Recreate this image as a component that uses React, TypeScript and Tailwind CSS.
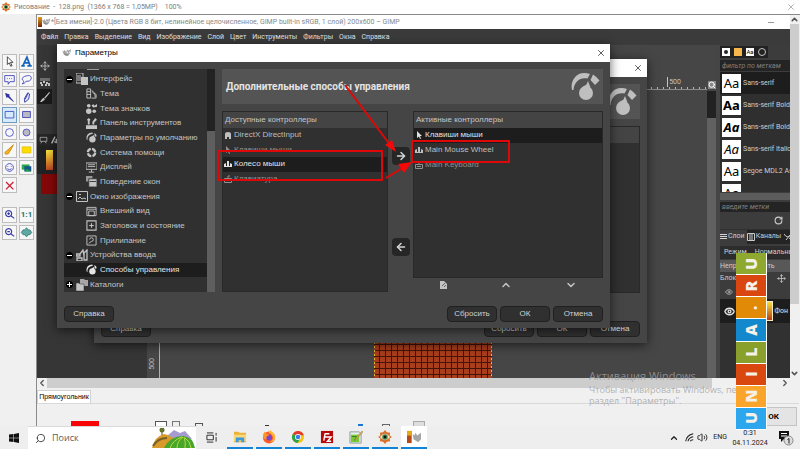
import type { ReactNode } from "react";
import {
  ArrowLeft,
  ArrowRight,
  ChevronDown,
  ChevronLeft,
  ChevronRight,
  ChevronUp,
  Eye,
  Move,
  RotateCw,
  Search,
  Volume2,
  X,
} from "lucide-react";

const toolIcons: { label: string; active?: boolean; icon: ReactNode }[] = [
  { label: "Курсор", icon: <path d="M5 2v9l2-2 2 4 1.500-.7-2-3.800h3z" fill="#fff" stroke="#333" /> },
  { label: "Текст", icon: <path d="M1.500 12.500h4M8.500 12.500h5M3.500 12 8 2.500l3.500 9.500M5.500 9h5" fill="none" stroke="#1565c0" strokeWidth="2" /> },
  { label: "Выноска", icon: <path d="M2 3h11v7H8l-2 3v-3H2zM4.500 6.500h1M7 6.500h1M9.500 6.500h1" fill="none" stroke="#3a3fb5" /> },
  { label: "Облако", icon: <path d="M7 3.500c4-1.500 6 0 6 2.500s-3 4-6 3.500c-1 2-3 3-4.500 3 1.500-1 2-2 1.500-3.500C1 7.500 3 4 7 3.500z" fill="none" stroke="#3a3fb5" /> },
  { label: "Стрелка", icon: <path d="M3 3l4.500 1.500-1 1L12 12 5.500 6.500l-1 1z" fill="#2a2fa0" stroke="#2a2fa0" /> },
  { label: "Карандаш", icon: <path d="M9 2l2 1.500-1 6L5.500 13l-.5-4zM9 3 6 9.500" fill="#dfe3ff" stroke="#2a2fa0" /> },
  { label: "Прямоугольник", active: true, icon: <path d="M2.500 4h10v7.500h-10z" fill="none" stroke="#3a4fc5" /> },
  { label: "Закрашенный прямоугольник", icon: <path d="M3 4h9v7H3z" fill="#b9b9c4" stroke="#3a3fb5" /> },
  { label: "Эллипс", icon: <circle cx="7.500" cy="7.500" r="4.500" fill="none" stroke="#4a4fc5" /> },
  { label: "Закрашенный эллипс", icon: <circle cx="7.500" cy="7.500" r="4" fill="#b9b9c4" stroke="#4a4fc5" /> },
  { label: "Кисть", icon: <path d="M12 2 6.500 7l2 2zM6 7.500 2 11l1 2 3-.5 2-3z" fill="#f5b51c" stroke="#c98b10" /> },
  { label: "Маркер", icon: <path d="M2.500 4.500h10v7h-10z" fill="#ffdb00" stroke="#e7c400" /> },
  { label: "Смайлик", icon: <path d="M7.500 3a4.500 4.500 0 1 0 .01 0zM5.500 6v.8M9.500 6v.8M5 9q2.500 2 5 0" fill="none" stroke="#3a3fb5" /> },
  { label: "Картинка", icon: <><path d="M2 4h9v6H2z" fill="#2aa84a" /><path d="M5 6h8v6H5z" fill="#15558c" /><path d="M5 12l3-3 5 3z" fill="#1aa04a" /></> },
  { label: "Удалить", icon: <path d="M3.500 3.500l8.500 8.500M12 3.500 3.500 12" fill="none" stroke="#cf1f3c" strokeWidth="1.500" /> },
];

const zoomIcons: { label: string; icon: ReactNode }[] = [
  { label: "Увеличить", icon: <path d="M6.500 3a3.500 3.500 0 1 0 .01 0zM9 9l4 3M6.500 5v3M5 6.500h3" fill="none" stroke="#353ba5" strokeWidth="1.300" /> },
  { label: "1:1", icon: null },
  { label: "Уменьшить", icon: <path d="M6.500 3a3.500 3.500 0 1 0 .01 0zM9 9l4 3M5 6.500h3" fill="none" stroke="#353ba5" strokeWidth="1.300" /> },
  { label: "По размеру окна", icon: <path d="M7.500 2l2 2.500h2L13.500 7.500l-2 2.500h-2l-2 2.500-2-2.500h-2L1.500 7.500l2-3h2z" fill="#5fa8a0" stroke="#2f7f78" /> },
];

const iconInterface = <><path d="M0 0h7v10H0zM2 2v6M4 2v6" fill="none" stroke="currentColor" /><path d="M5 4h7v8H5z" fill="currentColor" /></>;
const iconTheme = <path d="M1 1h4v10H1zM1 4h4M1 7h4M6 3q4 1 4 7M6 11h5V7L7 5" fill="none" stroke="currentColor" />;
const iconThemeIcons = <><circle cx="3" cy="3" r="2" /><circle cx="3" cy="9" r="3" /><circle cx="9" cy="9" r="2" /><path d="M6 3l2-2 1 2 3-2v3L8 5z" /></>;
const iconTools = <path d="M0 8h12v4H0zM1 2l2-2 2 2-1 1v4H2V3zM7 4l3-4 2 2-3 3v2H7z" />;
const iconGauge = <><circle cx="7" cy="8" r="3.500" /><path d="M7 .5Q0 1 .5 7.500L1.500 9Q1 3 7.500 2zM8.800 1.200l2.200 1.300.7 2-1.700.6zM6 5l3-2v4z" /></>;
const iconHelp = <circle cx="6" cy="6" r="4" fill="none" stroke="currentColor" strokeWidth="2.500" strokeDasharray="5 1.300" />;
const iconDisplay = <path d="M0 1h12v7H0zM3 11h6M2 3h8M2 5h8M6 8v3" fill="none" stroke="currentColor" />;
const iconWindows = <><path d="M0 0h7v6H0z" opacity=".7" /><path d="M3 3h9v9H3z" stroke="#333" /><path d="M4 6h7" stroke="#333" /></>;
const iconCanvas = <><path d="M.5.5h11v10H.5zM2 8l2-2 2 2 2-1 2 1" fill="none" stroke="currentColor" /><path d="M3 3h2v1H3z" /></>;
const iconLook = <path d="M1 1.500h10v9H1zM1 3.500h10M3 5.500h6v5H3z" fill="none" stroke="currentColor" />;
const iconTitle = <path d="M1 1h10v10H1zM6 3.500v5M3.500 6h5" fill="none" stroke="currentColor" strokeWidth="1.200" />;
const iconSnap = <path d="M1 1h10v10H1zM4 5q0-2 2-2t2 2-2 2l-3 2" fill="none" stroke="currentColor" />;
const iconInput = <path d="M1 9h5v3H1zM0 5h4v2H0zM4 5l3-4 1 6M8 4l3-3v10H8z" fill="none" stroke="currentColor" strokeWidth="1.300" />;
const iconFolders = <><path d="M4 0h4l1 1h3v6H4z" opacity=".8" /><path d="M0 4h3l1 1h4v7H0z" stroke="#333" strokeWidth=".5" /></>;

const tree: { label: string; icon: ReactNode; level?: "root"; open?: boolean; selected?: boolean }[] = [
  { label: "Интерфейс", icon: iconInterface, level: "root", open: true },
  { label: "Тема", icon: iconTheme },
  { label: "Тема значков", icon: iconThemeIcons },
  { label: "Панель инструментов", icon: iconTools },
  { label: "Параметры по умолчанию", icon: iconGauge },
  { label: "Система помощи", icon: iconHelp },
  { label: "Дисплей", icon: iconDisplay },
  { label: "Поведение окон", icon: iconWindows },
  { label: "Окно изображения", icon: iconCanvas, level: "root", open: true },
  { label: "Внешний вид", icon: iconLook },
  { label: "Заголовок и состояние", icon: iconTitle },
  { label: "Прилипание", icon: iconSnap },
  { label: "Устройства ввода", icon: iconInput, level: "root", open: true },
  { label: "Способы управления", icon: iconGauge, selected: true },
  { label: "Каталоги", icon: iconFolders, level: "root" },
];

const padIcon = <path d="M1 8V3q0-2 3-2t3 2v5H5V6H3v2z" />;
const pointerIcon = <path d="M2 0v7l2-1.500L5 8l1-.5L5 5h2z" />;
const wheelIcon = <path d="M0 7V4l2-1v3h1V1h2v5h1V3l2 1v3z" />;
const keyboardIcon = <path d="M.5 3.500h7v4h-7zM2 5.500h4M4 3V1h2" fill="none" stroke="currentColor" />;

type Controller = { label: string; icon: ReactNode; selected?: boolean; dim?: boolean };

const available: Controller[] = [
  { label: "DirectX DirectInput", icon: padIcon },
  { label: "Клавиши мыши", icon: pointerIcon, dim: true },
  { label: "Колесо мыши", icon: wheelIcon, selected: true },
  { label: "Клавиатура", icon: keyboardIcon, dim: true },
];

const active: Controller[] = [
  { label: "Клавиши мыши", icon: pointerIcon, selected: true },
  { label: "Main Mouse Wheel", icon: wheelIcon },
  { label: "Main Keyboard", icon: keyboardIcon, dim: true },
];

const menu = ["Файл", "Правка", "Выделение", "Вид", "Изображение", "Слой", "Цвет", "Инструменты", "Фильтры", "Окна", "Справка"];

const fonts = [
  { name: "Sans-serif", style: "" },
  { name: "Sans-serif Bold", style: "font-bold" },
  { name: "Sans-serif Bold", style: "font-bold italic" },
  { name: "Sans-serif Italic", style: "italic" },
  { name: "Segoe MDL2 As", style: "" },
  { name: "", style: "" },
];

const tiles = [
  { letter: "U", color: "bg-[#8fa82f]" },
  { letter: "R", color: "bg-[#d9460f]" },
  { letter: ".", color: "bg-[#e08a08]" },
  { letter: "A", color: "bg-[#1488cc]" },
  { letter: "L", color: "bg-[#8aa02c]" },
  { letter: "I", color: "bg-[#d8480f]" },
  { letter: "N", color: "bg-[#fba42c]" },
  { letter: "U", color: "bg-[#2ca6ec]" },
];

const Glyph = ({ children, className = "size-3", box = "0 0 12 12" }: { children: ReactNode; className?: string; box?: string }) => (
  <svg viewBox={box} className={`shrink-0 ${className}`} fill="currentColor" aria-hidden="true">
    {children}
  </svg>
);

const Wilber = ({ className = "" }: { className?: string }) => (
  <svg viewBox="0 0 12 10" className={`shrink-0 ${className}`} aria-hidden="true">
    <path d="M0 2l2 1 1-2 2 3 1-3 2 1 3-2-1 5-2 3-3 1-3-2.500z" fill="#a3a3a3" />
    <circle cx="6.500" cy="4.500" r="1" fill="#eee" />
    <circle cx="9" cy="4" r=".8" fill="#eee" />
    <path d="M2 6.500l5 1" stroke="#777" strokeWidth=".8" />
  </svg>
);

const GaugeLogo = () => (
  <svg viewBox="0 0 30 28" className="h-7 w-[30px] shrink-0" fill="#bfbfbf" aria-hidden="true">
    <path d="M1 17C-1 8 5 0 13 0q3.500 0 6 1l-2.500 4.500C9 4 3 9 2.500 17z" />
    <path d="M22 1.500q4 2.500 6.500 6L24 12l-4.500-5z" />
    <path d="M10.500 14.500l5-3L17 8l2.500 6.500z" />
    <circle cx="15" cy="20" r="7" />
  </svg>
);

const GimpButton = ({ children }: { children: ReactNode }) => (
  <button className="h-4 w-[50px] rounded-sm border border-[#202020] bg-[#303030] text-center text-[8px] leading-3 text-[#d0d0d0]">
    {children}
  </button>
);

const PrefsWindow = ({ children, title, className }: { children: ReactNode; title?: string; className: string }) => (
  <div className={`absolute w-[553px] bg-[#454545] font-['Liberation_Sans',sans-serif] shadow-[0_2px_10px_rgba(0,0,0,0.6)] ${className}`}>
    <div className="flex h-[18px] items-center bg-white px-1">
      <Wilber className="h-2 w-3" />
      <span className="ml-[2px] flex-1 text-[8px] text-black">{title}</span>
      <button aria-label="Закрыть">
        <X className="size-[10px] text-neutral-700" strokeWidth={2} />
      </button>
    </div>
    <div className="px-[7px] pt-[7px] pb-[6px]">
      {children}
      <div className="mt-[14px] flex gap-[3px]">
        <GimpButton>Справка</GimpButton>
        <div className="flex-1" />
        <GimpButton>Сбросить</GimpButton>
        <GimpButton>ОК</GimpButton>
        <GimpButton>Отмена</GimpButton>
      </div>
    </div>
  </div>
);

const ControllerList = ({
  title,
  items,
  className,
  rowsClass,
}: {
  title: string;
  items: Controller[];
  className: string;
  rowsClass: string;
}) => (
  <div className={`flex flex-col border border-[#292929] bg-[#303030] ${className}`}>
    <div className="h-4 bg-[#444444] px-[2px] text-[8px] leading-4 text-[#c4c4c4]">{title}</div>
    <ul className={`grid auto-rows-fr ${rowsClass}`}>
      {items.map((item) => (
        <li
          key={item.label}
          className={`flex min-h-0 items-center gap-[2px] px-px text-[8px] leading-3 ${
            item.selected ? "bg-[#1d1d1d] text-[#e2e2e2]" : item.dim ? "text-[#909090]" : "text-[#bebebe]"
          }`}
        >
          <Glyph className="size-2" box="0 0 8 8">{item.icon}</Glyph>
          {item.label}
        </li>
      ))}
    </ul>
  </div>
);

const CategoryTree = () => (
  <div className="flex h-[223px] w-[151px] overflow-hidden bg-[#303030]">
    <div className="flex flex-1 flex-col">
      <div className="flex h-[3px] items-start pl-[23px]">
        <span className="h-px w-3 bg-[#9a9a9a]" />
      </div>
      <ul className="grid flex-1 auto-rows-fr">
        {tree.map((node) => (
          <li
            key={node.label}
            className={`flex min-h-0 items-center text-[8px] leading-3 ${node.selected ? "bg-[#1d1d1d] text-[#e4e4e4]" : "text-[#c4c4c4]"} ${
              node.level ? "pl-[2px]" : "pl-[22px]"
            }`}
          >
            {node.level && (
              <span className="mr-[3px] flex size-[7px] items-center justify-center rounded-sm bg-black">
                <svg viewBox="0 0 5 5" className="size-[5px]" stroke="#fff" aria-hidden="true">
                  <path d={node.open ? "M0 2.500h5" : "M0 2.500h5M2.500 0v5"} />
                </svg>
              </span>
            )}
            <Glyph className={node.level ? "mr-[2px] size-3" : "mr-[3px] size-[11px]"}>{node.icon}</Glyph>
            <span className="whitespace-nowrap">{node.label}</span>
          </li>
        ))}
      </ul>
    </div>
    <div className="flex w-2 flex-col bg-[#222222]">
      <div className="mt-[62px] flex-1 bg-[#5e5e5e]" />
    </div>
  </div>
);

const FrontDialog = () => (
  <PrefsWindow title="Параметры" className="left-5 top-[29px]">
    <div className="flex gap-[7px]">
      <CategoryTree />
      <div className="flex flex-1 flex-col gap-[7px]">
        <div className="flex h-[35px] items-center justify-between bg-[#545454] pl-1 pr-[2px]">
          <h1 className="font-[Roboto,sans-serif] text-[10px] font-bold text-[#e4e4e4]">Дополнительные способы управления</h1>
          <GaugeLogo />
        </div>
        <div className="flex flex-1">
          <ControllerList title="Доступные контроллеры" items={available} className="w-[166px]" rowsClass="h-[58px]" />
          <div className="flex w-[25px] flex-col items-center gap-[73px] pt-9">
            <button aria-label="Добавить" className="flex size-[18px] items-center justify-center rounded-sm bg-[#262626] text-[#d5d5d5]">
              <ArrowRight className="size-3" strokeWidth={3} />
            </button>
            <button aria-label="Убрать" className="flex size-[18px] items-center justify-center rounded-sm bg-[#262626] text-[#d5d5d5]">
              <ArrowLeft className="size-3" strokeWidth={3} />
            </button>
          </div>
          <div className="flex flex-1 flex-col">
            <ControllerList title="Активные контроллеры" items={active} className="flex-1" rowsClass="h-11" />
            <div className="flex h-[14px] items-center justify-around text-[#c4c4c4]">
              <button aria-label="Настроить">
                <Glyph className="size-2" box="0 0 8 8">
                  <path d="M1 0h4l3 3v5H1z" />
                  <path d="M3 5l3-3M5 6l2-2" stroke="#666" />
                </Glyph>
              </button>
              <button aria-label="Выше">
                <ChevronUp className="size-3" strokeWidth={3} />
              </button>
              <button aria-label="Ниже">
                <ChevronDown className="size-3" strokeWidth={3} />
              </button>
            </div>
          </div>
        </div>
      </div>
    </div>
  </PrefsWindow>
);

const BackDialog = () => (
  <PrefsWindow className="left-[57px] top-11">
    <div className="flex h-[223px] flex-col gap-[7px] pl-[158px]">
      <div className="flex h-[35px] items-center justify-end bg-[#545454] pr-[2px]">
        <GaugeLogo />
      </div>
      <div className="mb-[14px] flex-1 border border-[#292929] bg-[#303030]">
        <div className="h-4 bg-[#444444]" />
      </div>
    </div>
  </PrefsWindow>
);

const Toolbox = () => (
  <aside className="flex w-9 shrink-0 flex-col bg-[#f0f0f0] px-[2px] pt-10">
    <div className="grid h-[139px] auto-rows-fr grid-cols-2 gap-x-[2px] gap-y-[2px]">
      {toolIcons.map((tool) => (
        <button
          key={tool.label}
          aria-label={tool.label}
          className={`flex items-center justify-center border ${tool.active ? "border-[#6f9cc0] bg-[#d6eafa]" : "border-[#bdbdbd] bg-[#f7f7f7]"}`}
        >
          <Glyph className="size-[13px]" box="0 0 15 15">{tool.icon}</Glyph>
        </button>
      ))}
    </div>
    <div className="mt-[14px] grid h-[33px] auto-rows-fr grid-cols-2 gap-x-[2px] gap-y-[2px]">
      {zoomIcons.map((tool) => (
        <button key={tool.label} aria-label={tool.label} className="flex items-center justify-center border border-[#bdbdbd] bg-[#f7f7f7]">
          {tool.icon ? (
            <Glyph className="size-[13px]" box="0 0 15 15">{tool.icon}</Glyph>
          ) : (
            <span className="text-[8px] leading-3 font-bold text-[#1d7466]">1:1</span>
          )}
        </button>
      ))}
    </div>
  </aside>
);

const GimpTools = () => (
  <div className="flex w-[110px] shrink-0 flex-col bg-[#363636] text-[#c4c4c4]">
    <div className="flex h-[44px] w-[15px] flex-col items-center gap-[7px] pt-4">
      <Move className="size-[10px]" strokeWidth={2} />
      <Glyph className="h-2 w-[10px]" box="0 0 10 8">
        <path d="M0 0h10v3H0z" opacity=".4" />
        <path d="M0 4h2v2H0zM3 3h2v2H3zM6 4h2v2H6zM1 6h2v2H1zM5 6h2v2H5zM8 5h2v3H8z" />
      </Glyph>
    </div>
    <div className="flex size-[15px] items-center justify-center bg-[#1b1b1b]">
      <Glyph className="size-[10px]">
        <path d="M11 0 5 7l1 1 6-7zM4 7l2 2-4 3H0l2-3z" />
      </Glyph>
    </div>
    <div className="mt-[30px] flex h-3 items-center gap-[3px] bg-[#262626] pl-[2px]">
      <Glyph className="h-2 w-[9px]">
        <path d="M1 2h10v6H1zM4 8l-2 3M8 8l2 3" fill="none" stroke="currentColor" />
      </Glyph>
      <Glyph className="size-2">
        <path d="M1 11 6 1M5 9h4M8 4v7" fill="none" stroke="currentColor" strokeWidth="2" />
      </Glyph>
    </div>
    <div className="flex w-6 justify-center bg-[#222222] py-1">
      <div className="h-5 w-[7px] bg-gradient-to-b from-[#f4e03a] to-[#bb4420]" />
    </div>
    <div className="ml-1 h-5 w-5 bg-[#850808]" />
  </div>
);

const Canvas = () => (
  <div className="flex min-w-0 flex-1 flex-col bg-[#464646] pt-8">
    <div className="flex h-[10px] items-end justify-end">
      <span className="mr-[26px] border-l border-[#c4c4c4] pl-px text-[7px] leading-[10px] text-[#c4c4c4]">500</span>
    </div>
    <svg className="h-[3px] w-full" aria-hidden="true">
      <path d="M0 2.500h2000" stroke="#8a8a8a" />
      <path d="M0 1h2000" stroke="#b5b5b5" strokeWidth="2" strokeDasharray="1 5" />
    </svg>
    <div className="flex flex-1 items-stretch">
      <div className="flex w-[13px] flex-col justify-end border-r border-[#b0b0b0] bg-[#474747] pb-2 text-[7px] text-[#c0c0c0]">
        <span className="[writing-mode:vertical-rl] rotate-180 leading-[10px]">500</span>
      </div>
      <div className="flex flex-1 items-end pl-[214px]">
        <svg className="h-[36px] w-[118px]" aria-hidden="true">
          <defs>
            <pattern id="grid" width="6" height="6" patternUnits="userSpaceOnUse">
              <path d="M0 0h6v6H0z" fill="#a93e1c" />
              <path d="M5.500 0v6M0 2.500h6" stroke="#42150a" />
            </pattern>
          </defs>
          <rect width="118" height="36" fill="url(#grid)" />
          <path d="M.5 0v36M117.500 0v36" stroke="#d6c02c" strokeDasharray="2 2" />
        </svg>
      </div>
    </div>
  </div>
);

const Dock = () => (
  <aside className="flex w-[70px] shrink-0 flex-col overflow-hidden bg-[#3c3c3c] pt-px text-[7px] text-[#cccccc]">
    <div className="flex h-3 w-12 items-center justify-around bg-[#222222]">
      <span className="flex size-2 items-center justify-center bg-white">
        <span className="size-1 rounded-full bg-neutral-800" />
      </span>
      <span className="size-2 bg-[#f6b64b]" />
      <span className="size-2 bg-white text-center text-[6px] leading-2 text-black">Aa</span>
      <span className="size-2 rounded-full border border-[#c4c4c4]" />
    </div>
    <input
      aria-label="Фильтр по меткам"
      placeholder="фильтр по меткам"
      className="mt-[2px] h-[11px] w-full bg-[#242424] px-[2px] text-[7px] italic placeholder:text-[#808080]"
    />
    <ul className="mt-px h-[120px] shrink-0 overflow-hidden bg-[#2f2f2f]">
      {fonts.map((font, i) => (
        <li key={i} className={`flex h-[22px] items-center gap-[2px] pl-[2px] whitespace-nowrap ${i === 0 ? "bg-[#1d1d1d]" : ""}`}>
          <span className={`flex size-[19px] shrink-0 items-center justify-center bg-white font-['Noto_Sans',sans-serif] text-[13px] leading-4 text-black ${font.style}`}>Aa</span>
          {font.name}
        </li>
      ))}
    </ul>
    <div className="mt-px h-[7px] shrink-0 bg-[#5c5c5c]" />
    <input
      aria-label="Метки"
      placeholder="введите метки"
      className="mt-[2px] h-[10px] w-full bg-[#242424] px-[2px] text-[7px] italic placeholder:text-[#808080]"
    />
    <div className="flex h-[17px] items-center justify-end pr-[7px]">
      <RotateCw className="size-[9px]" strokeWidth={3} />
    </div>
    <div className="flex h-[14px] items-center border-t border-[#303030] whitespace-nowrap">
      <span className="mr-px flex flex-col gap-px">
        <span className="h-px w-[7px] bg-[#d5d5d5]" />
        <span className="h-px w-[7px] bg-[#d5d5d5]" />
        <span className="h-px w-[7px] bg-[#d5d5d5]" />
      </span>
      Слои
      <span className="ml-[2px] flex h-[14px] items-center gap-px bg-[#242424]">
        <Glyph className="size-2" box="0 0 8 8">
          <path d="M.5.500h7v7h-7zM3 1v6M5 1v6" fill="none" stroke="currentColor" />
        </Glyph>
        Каналы
        <Glyph className="ml-[2px] size-2" box="0 0 8 8">
          <path d="M0 1q3 5 7 1M2 7l4-5M5 5l3 2" fill="none" stroke="currentColor" />
        </Glyph>
      </span>
    </div>
    <div className="mt-[3px] flex h-[13px] shrink-0 items-center gap-2 bg-[#2c2c2c] pl-1 whitespace-nowrap">
      <span>Режим</span>
      <span>Нормальный</span>
    </div>
    <div className="mt-px h-3 shrink-0 bg-[#585858] leading-3">Непрозрачность</div>
    <div className="flex h-[13px] shrink-0 items-center justify-between overflow-hidden pr-1 whitespace-nowrap">
      <span>Блокировка</span>
      <Move className="size-[9px] shrink-0" strokeWidth={2} />
    </div>
    <div className="flex h-[14px] shrink-0 items-center pl-[5px]">
      <Eye className="size-2" />
    </div>
    <div className="flex h-6 shrink-0 items-center bg-[#1d1d1d] pl-1 text-[#e0e0e0]">
      <Eye className="size-[11px]" strokeWidth={3} />
      <span className="ml-auto h-5 w-[10px] border border-[#f4ebc0] bg-gradient-to-b from-[#f4e03a] to-[#b03a18]" />
      <span className="mx-[2px] whitespace-nowrap">Фон</span>
    </div>
    <div className="flex-1 bg-[#313131]" />
  </aside>
);

const GimpWindow = () => (
  <section className="relative flex min-w-0 flex-1 flex-col overflow-hidden bg-[#454545]">
    <div className="flex h-[14px] shrink-0 items-center bg-white pl-px text-[7px] text-[#878787]">
      <span className="h-[10px] w-1 bg-gradient-to-b from-[#e8a020] to-[#732407]" />
      <Wilber className="h-2 w-[9px]" />
      <span className="flex-1 whitespace-nowrap">
        *[Без имени]-2.0 (Цвета RGB 8 бит, нелинейное целочисленное, GIMP built-in sRGB, 1 слой) 200x600 – GIMP
      </span>
      <span className="mr-4 h-px w-[6px] bg-[#999999]" />
    </div>
    <nav className="flex h-4 shrink-0 items-center gap-[6px] bg-[#3b3b3b] pl-1 text-[7px] text-[#e0e0e0]">
      {menu.map((item) => (
        <button key={item}>{item}</button>
      ))}
    </nav>
    <div className="flex flex-1">
      <GimpTools />
      <Canvas />
      <div className="mr-1 flex w-[9px] shrink-0 flex-col bg-[#222222]">
        <div className="h-[34px] bg-[#464646]" />
        <div className="flex h-3 items-center justify-center bg-[#464646]">
          <Search className="size-2 bg-[#888888] text-white" strokeWidth={3} />
        </div>
        <div className="mt-[27px] flex-1 bg-[#616161]" />
      </div>
      <Dock />
    </div>

    <BackDialog />
    <FrontDialog />

    {/* Callout frames and arrows */}
    <svg viewBox="0 0 300 110" className="pointer-events-none absolute left-[179px] top-[65px] h-[110px] w-[300px]" aria-hidden="true">
      <g fill="none" stroke="#df0808" strokeWidth="2">
        <path d="M2 71h164v29H2zM196 61h97v21h-97z" />
        <path d="M129 5l46 61M170 98l18-11" />
      </g>
      <path d="M180 72l-11-7 7-5zM196 82l-8 11-6-9z" fill="#f50808" />
    </svg>
  </section>
);

const WinLogo = () => (
  <svg viewBox="0 0 10 10" className="size-[10px]" fill="#111" aria-hidden="true">
    <path d="M0 1.500 4.500 1v3.700H0zM5 .9 10 0v4.700H5zM0 5.200h4.500V9L0 8.500zM5 5.200h5V10l-5-.9z" />
  </svg>
);

const apps: { label: string; current?: boolean; icon: ReactNode }[] = [
  { label: "Проводник", icon: <><path d="M1 2h5l1 1h7v10H1z" fill="#e9b23a" /><path d="M1 5h13v7H1z" fill="#fbd777" /><path d="M3 13V8h9v5h-3v-2H6v2z" fill="#3a9adb" /></> },
  { label: "Firefox", icon: <><circle cx="7.500" cy="8" r="6.500" fill="#ff5a2a" /><path d="M7 3l2-3c1 2 5 3 5 8a6 6 0 0 1-6 5c6-2 5-8-1-10z" fill="#ffbd2e" /><circle cx="7.500" cy="8" r="3.200" fill="#7a45c9" /><path d="M1 7c0-2 1-4 2-5 1 3 4 2 5 4-3 0-4 2-3 4-2 0-4-1-4-3z" fill="#ff9524" /></> },
  { label: "Chrome", icon: <><circle cx="7.500" cy="7.500" r="6.500" fill="#f9c513" /><path d="M7.500 7.500 1.900 4.200A6.500 6.500 0 0 1 13.700 5.500H7.500z" fill="#e33b2e" /><path d="M7.500 7.500 1.900 4.200A6.500 6.500 0 0 0 7 14l3-5z" fill="#2da14c" /><circle cx="7.500" cy="7.500" r="3.200" fill="#fff" /><circle cx="7.500" cy="7.500" r="2.400" fill="#3b7ee6" /></> },
  { label: "FileZilla", icon: <><path d="M1 1h13v13H1z" fill="#b5080b" /><path d="M4 11.500 5.500 4H10M5 7.500h3.500M8 7.500h4L8 12h4" fill="none" stroke="#fff" strokeWidth="1.500" /></> },
  { label: "Notepad++", icon: <><path d="M1 2h10l2 2v10H1z" fill="#e8edf0" stroke="#8b9a9a" /><path d="M2 5h9v8H2z" fill="#78c932" /><path d="M3 7h5l-2 4" fill="none" stroke="#2f7d1b" /><path d="M14 1 7 9l-1 2 2-1 7-8z" fill="#edb52a" stroke="#777" strokeWidth=".5" /></> },
  { label: "PicPick", icon: <><path d="M7.500 0l2 2.500L13 3l-.5 3L15 7.500 12.500 9l.5 3-3.500.5-2 2.500-2-2.500L2 12l.5-3L0 7.500 2.500 6 2 3l3.500-.5z" fill="#d9702c" /><path d="M2 7.500q5.500-7 11 0-5.500 7-11 0z" fill="#f0e8b8" /><circle cx="7.500" cy="7.500" r="3" fill="#4b8a5a" /><circle cx="7.500" cy="7.500" r="1.500" fill="#111" /></> },
  { label: "GIMP", current: true, icon: <><path d="M0 1h5v13H0z" fill="#b84818" /><path d="M0 1h5v5H0z" fill="#e6a91d" /><path d="M6 4l2 2 1-3 2 3 4-3v7l-3 3-5-3z" fill="#a5a5a5" /></> },
];

const Taskbar = () => (
  <footer className="flex h-[23px] shrink-0 items-center bg-[#eeeeee] text-[#222222]">
    <button aria-label="Пуск" className="flex w-7 justify-center">
      <WinLogo />
    </button>
    <label className="flex h-full w-[168px] items-center overflow-hidden border-t border-[#d9d9d9] bg-white pl-[7px]">
      <Search className="size-[11px] shrink-0 -scale-x-100 text-neutral-700" strokeWidth={2} />
      <input aria-label="Поиск" placeholder="Поиск" className="ml-[6px] w-20 text-[9px] font-['Open_Sans',sans-serif] placeholder:text-[#5c5c5c]" />
      <svg viewBox="0 0 44 20" className="ml-auto h-5 w-11 shrink-0" aria-hidden="true">
        <path d="M14 9 22 2l6 3 5-2 7 8H14z" fill="#a59bd0" />
        <path d="M0 20Q3 8 12 6q6 1 10 5l-8 9z" fill="#d99a2c" />
        <path d="M1 18q5-8 14-8" stroke="#785f26" strokeWidth="2" fill="none" />
        <path d="M12 20Q18 8 31 8q10 1 12 12z" fill="#46a52a" />
        <path d="M18 20q3-8 12-11M25 20q0-7 6-11M33 20q1-6-1-11M39 20q-1-7-6-10" stroke="#b7db3f" fill="none" />
        <path d="M10 7V2" stroke="#664322" />
        <circle cx="10" cy="2" r="2.500" fill="#63742a" />
      </svg>
    </label>
    <button aria-label="Представление задач" className="flex w-[30px] justify-center">
      <Glyph className="size-[11px]">
        <path d="M1 1h7M1 11h7M1 3.500h7v5H1zM11 1v3M11 5.500v5" fill="none" stroke="currentColor" />
      </Glyph>
    </button>
    <div className="flex h-full gap-[3px] pl-px">
      {apps.map((app) => (
        <button
          key={app.label}
          aria-label={app.label}
          className={`flex w-[26px] items-center justify-center border-b-2 border-[#1383d8] ${app.current ? "bg-white" : ""}`}
        >
          <Glyph className="size-[14px]" box="0 0 15 15">{app.icon}</Glyph>
        </button>
      ))}
    </div>
    <div className="ml-auto flex items-center">
      <ChevronUp className="size-[10px]" strokeWidth={3} />
      <Glyph className="ml-[6px] size-[9px]">
        <path d="M1 11Q2 3 11 1M4 11q1-5 7-6M7 11q1-2 4-2" fill="none" stroke="currentColor" strokeWidth="1.500" />
      </Glyph>
      <Volume2 className="ml-[3px] size-[11px]" strokeWidth={2} />
      <span className="ml-[5px] text-[7px]">ENG</span>
      <span className="ml-[5px] flex w-9 flex-col items-center text-[7px] leading-[10px]">
        <span>0:31</span>
        <span>04.11.2024</span>
      </span>
      <button aria-label="Уведомления" className="relative mr-[6px] ml-[10px] w-4">
        <svg viewBox="0 0 16 16" className="size-4" aria-hidden="true">
          <path d="M1 1h10v8H6l-3 3V9H1z" fill="#111" />
          <path d="M3 3.500h6M3 6h6" stroke="#fff" />
          <circle cx="10.500" cy="10.500" r="4.500" fill="#ddd" stroke="#888" />
          <path d="M9.500 9.500l1.500-1v5" stroke="#222" fill="none" />
        </svg>
      </button>
    </div>
  </footer>
);

const ToolPanel = () => (
  <div className="h-[38px] shrink-0 overflow-hidden bg-[#f0f0f0] pt-[2px]">
    <button className="block h-[13px] w-[54px] border border-b-0 border-[#d2d2d2] bg-white font-['Liberation_Sans',sans-serif] text-[7px] leading-3 text-black">Прямоугольник</button>
    <div className="flex h-[23px] items-end border-t border-[#d9d9d9]">
      <div className="flex flex-1 items-end gap-[5px] pl-[34px]">
        <span className="h-[5px] w-7 bg-[#f80505]" />
        <span className="ml-[51px] h-[5px] w-3 border border-b-0 border-[#555555] bg-white" />
        <span className="h-[5px] w-2 border border-b-0 border-[#777777]" />
        <span className="ml-[10px] h-[3px] w-2 border border-b-0 border-[#555555]" />
        <span className="ml-[57px] h-px w-1 bg-[#333333]" />
        <span className="ml-[84px] h-[2px] w-[5px] bg-[#1976d2]" />
        <span className="ml-[14px] h-[2px] w-2 border border-b-0 border-[#666666]" />
        <span className="ml-[18px] h-[5px] w-3 border border-b-0 border-[#aaaaaa] bg-[#dddddd]" />
      </div>
      <button className="mr-[2px] h-[19px] w-[55px] border border-[#c4c4c4] bg-[#e4e4e4] pl-2 text-[8px] font-bold text-black">ОК</button>
    </div>
  </div>
);

const App = () => {
  return (
    <main className="relative flex h-screen flex-col overflow-hidden bg-[#f0f0f0] font-[Roboto,'Noto_Sans',sans-serif]">
      <header className="flex h-[14px] shrink-0 items-center bg-white pl-px pr-1">
        <Glyph className="size-[10px]" box="0 0 15 15">{apps[5].icon}</Glyph>
        <span className="ml-[3px] flex-1 text-[7px] whitespace-pre text-[#7c7c7c]">{"Рисование  -  128.png  (1366 x 768 = 1,05MP)    100%"}</span>
        <button aria-label="Закрыть">
          <X className="size-[10px] text-[#a5a5a5]" strokeWidth={2} />
        </button>
      </header>
      <div className="flex min-h-0 flex-1">
        <Toolbox />
        <div className="flex min-w-0 flex-1 flex-col border-t border-l border-[#8a8a8a] pr-px">
          <div className="flex min-h-0 flex-1">
            <GimpWindow />
            <div className="flex w-[9px] shrink-0 flex-col items-center bg-[#f0f0f0]">
              <ChevronUp className="size-[9px] text-neutral-600" strokeWidth={4} />
              <div className="h-[280px] w-full bg-[#cdcdcd]" />
              <ChevronDown className="mt-auto size-[9px] text-neutral-600" strokeWidth={4} />
            </div>
          </div>
          <div className="flex h-[10px] shrink-0 items-center bg-[#f0f0f0] pr-[9px]">
            <ChevronLeft className="size-[10px] text-neutral-600" strokeWidth={3} />
            <div className="h-full w-[665px] bg-[#cdcdcd]" />
            <ChevronRight className="ml-auto size-[10px] text-neutral-600" strokeWidth={3} />
          </div>
          <ToolPanel />
        </div>
      </div>
      <Taskbar />

      {/* Windows activation notice */}
      <div className="pointer-events-none absolute left-[589px] top-[368px] w-[147px] overflow-hidden font-['Open_Sans',sans-serif] whitespace-nowrap text-[#a0a0a0]/80">
        <p className="text-[11px] leading-4">Активация Windows</p>
        <p className="text-[9px] leading-[11px]">Чтобы активировать Windows, перейдите в</p>
        <p className="text-[9px] leading-[11px]">раздел "Параметры".</p>
      </div>

      {/* Site badge */}
      <div className="absolute left-[736px] top-[253px] flex h-[177px] w-[31px] flex-col gap-px border-r border-b border-white bg-white">
        {tiles.map((tile, i) => (
          <div key={i} className={`flex min-h-0 flex-1 items-center justify-center ${tile.color}`}>
            <span className="-rotate-90 font-['Open_Sans',sans-serif] text-[16px] leading-4 font-extrabold text-[#f5f0e8]">{tile.letter}</span>
          </div>
        ))}
      </div>
    </main>
  );
};

export default App;
